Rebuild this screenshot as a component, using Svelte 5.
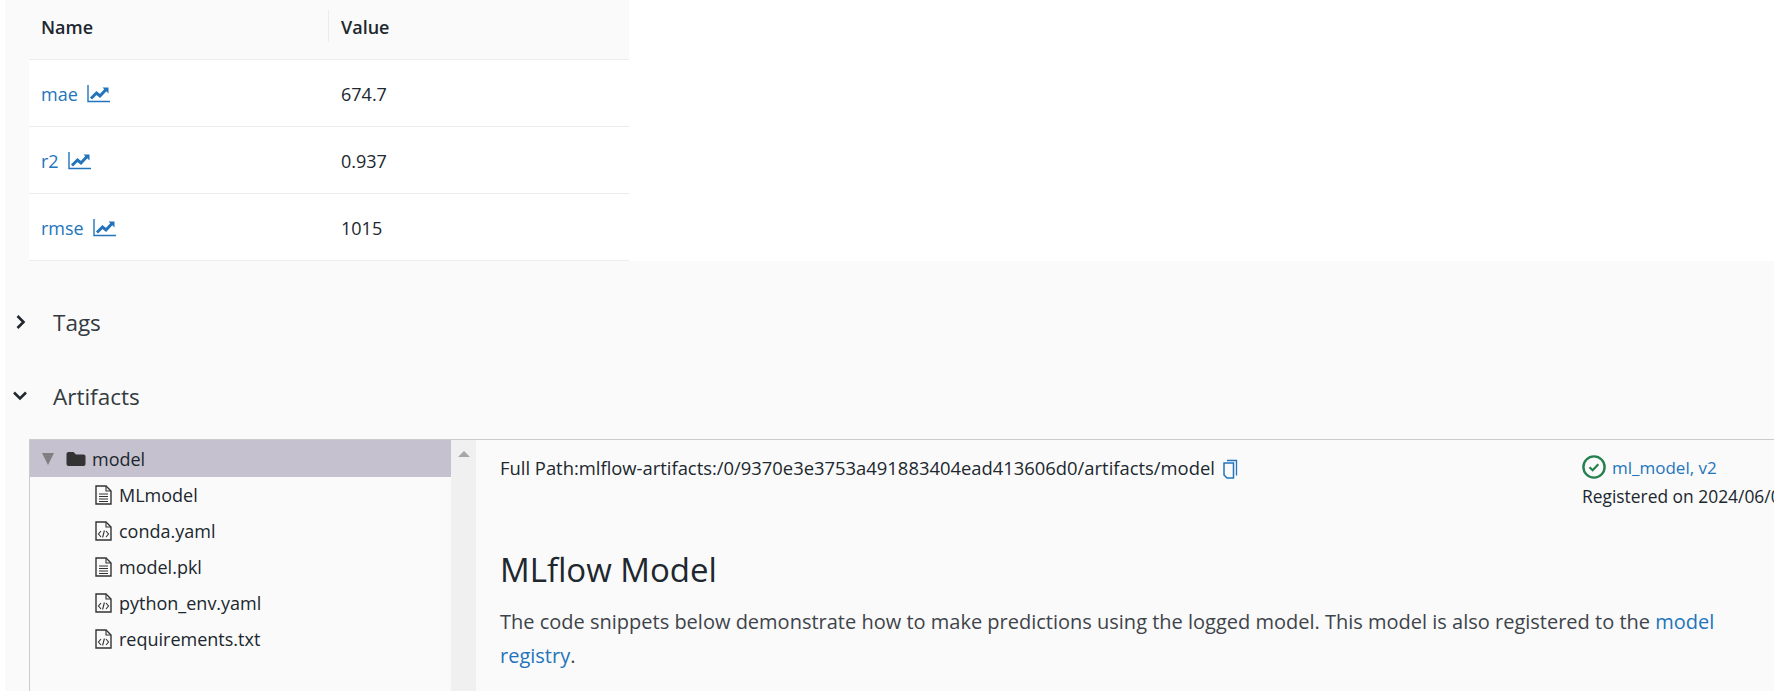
<script>
  const metrics = [
    { name: 'mae', value: '674.7' },
    { name: 'r2', value: '0.937' },
    { name: 'rmse', value: '1015' }
  ]
  const files = [
    { name: 'MLmodel', type: 'text' },
    { name: 'conda.yaml', type: 'code' },
    { name: 'model.pkl', type: 'text' },
    { name: 'python_env.yaml', type: 'code' },
    { name: 'requirements.txt', type: 'code' }
  ]
</script>

<div class="page">
  <section class="metrics">
    <table>
      <thead>
        <tr>
          <th class="col-name">Name</th>
          <th>Value</th>
        </tr>
      </thead>
      <tbody>
        {#each metrics as m}
          <tr>
            <td class="col-name">
              <a href="#metric" class="link">{m.name}</a>
              <svg class="chart" viewBox="0 0 24 20" width="24" height="20">
                <path d="M1 1v16.5h22" fill="none" stroke="#2374bb" stroke-width="1.4" />
                <path d="M4 14.5l5.5-5.5 3.5 3 6-6.5" fill="none" stroke="#2374bb" stroke-width="3" />
                <path d="M15.5 3.5h6v6z" fill="#2374bb" />
              </svg>
            </td>
            <td>{m.value}</td>
          </tr>
        {/each}
      </tbody>
    </table>
  </section>

  <div class="section-head tags">
    <svg viewBox="0 0 12 16" width="12" height="16"><path d="M2.5 2l6 6-6 6" fill="none" stroke="#20272e" stroke-width="2.6" /></svg>
    <span>Tags</span>
  </div>
  <div class="section-head artifacts">
    <svg viewBox="0 0 16 12" width="16" height="12"><path d="M2 2.5l6 6 6-6" fill="none" stroke="#20272e" stroke-width="2.6" /></svg>
    <span>Artifacts</span>
  </div>

  <div class="browser">
    <aside class="tree">
      <div class="rows">
        <div class="row root">
          <span class="caret"></span>
          <svg class="folder" viewBox="0 0 20 16" width="20" height="16">
            <path d="M2.5 1h5l2.5 2.5h7.5a2 2 0 0 1 2 2V13a2 2 0 0 1-2 2h-15a2 2 0 0 1-2-2V3a2 2 0 0 1 2-2z" fill="#333" />
          </svg>
          <span>model</span>
        </div>
        {#each files as f}
          <div class="row file">
            <svg viewBox="0 0 17 20" width="17" height="20">
              <path d="M1 1h10l5 5v13H1z" fill="none" stroke="#333" stroke-width="1.4" />
              <path d="M11 1v5h5" fill="none" stroke="#333" stroke-width="1.1" />
              {#if f.type === 'text'}
                <path d="M4 9h9M4 11.5h9M4 14h9M4 16.5h9" stroke="#333" stroke-width="1.1" />
              {:else}
                <path d="M6 10l-2.5 3L6 16M11 10l2.5 3L11 16M9.4 9.5l-1.8 7" fill="none" stroke="#333" stroke-width="1.1" />
              {/if}
            </svg>
            <span>{f.name}</span>
          </div>
        {/each}
      </div>
      <div class="scrollbar"><span class="up"></span></div>
    </aside>

    <main class="view">
      <div class="view-top">
        <div class="path">
          Full Path:mlflow-artifacts:/0/9370e3e3753a491883404ead413606d0/artifacts/model
          <svg viewBox="0 0 16 20" width="16" height="20">
            <path d="M5 1.5h9.5v15" fill="none" stroke="#2374bb" stroke-width="1.3" />
            <path d="M2 4h9.5v15H5l-3-3z" fill="none" stroke="#2374bb" stroke-width="1.5" />
          </svg>
        </div>
        <div class="registered">
          <div class="reg-name">
            <svg viewBox="0 0 24 24" width="24" height="24">
              <circle cx="12" cy="12" r="10.6" fill="none" stroke="#24804d" stroke-width="2.4" />
              <path d="M7.5 12.2l3.2 3 5.6-6" fill="none" stroke="#24804d" stroke-width="2.2" />
            </svg>
            <a href="#model" class="link">ml_model, v2</a>
          </div>
          <div class="reg-date">Registered on 2024/06/0</div>
        </div>
      </div>
      <h1>MLflow Model</h1>
      <p>The code snippets below demonstrate how to make predictions using the logged model. This model is also registered to the <a href="#registry" class="link">model registry</a>.</p>
    </main>
  </div>
</div>

<style>
  :global(body) {
    margin: 0;
    background: #fafafa;
  }

  .page {
    height: 691px;
    overflow: hidden;
    border-left: 5px solid #fff;
    box-sizing: border-box;
    font-family: "Open Sans", "Noto Sans", sans-serif;
    font-size: 18px;
    color: #20272e;
  }

  .link {
    color: #2374bb;
    text-decoration: none;
  }

  .metrics {
    background: #fff;
    height: 261px;
  }

  table {
    width: 624px;
    border-collapse: collapse;
    border-left: 24px solid #fafafa;
    table-layout: fixed;
  }

  th {
    height: 59px;
    padding: 0 0 5px 12px;
    box-sizing: border-box;
    background: #fafafa;
    border-bottom: 1px solid #ececec;
    text-align: left;
    font-weight: 600;
  }

  td {
    height: 67px;
    padding: 3px 0 0 12px;
    box-sizing: border-box;
    background: #fff;
    border-bottom: 1px solid #ececec;
  }

  .col-name {
    width: 312px;
  }

  th.col-name {
    position: relative;
  }

  th.col-name::after {
    content: '';
    position: absolute;
    top: 10px;
    right: 0;
    width: 1px;
    height: 32px;
    background: #ececec;
  }

  .chart {
    vertical-align: -3px;
    margin-left: 5px;
  }

  .section-head {
    display: flex;
    align-items: center;
    font-size: 22.5px;
    color: #333a41;
  }

  .section-head svg {
    flex: none;
  }

  .section-head.tags {
    padding: 46px 0 0 10px;
    height: 30px;
  }

  .section-head.tags span {
    margin-left: 26px;
  }

  .section-head.artifacts {
    padding: 44px 0 0 7px;
    height: 30px;
  }

  .section-head.artifacts span {
    margin-left: 25px;
  }

  .browser {
    display: flex;
    margin: 28px 0 0 24px;
    border-top: 1px solid #ccc;
    border-left: 1px solid #ccc;
    height: 260px;
  }

  .tree {
    display: flex;
    flex: none;
    width: 446px;
  }

  .rows {
    flex: 1;
  }

  .row {
    display: flex;
    align-items: center;
    height: 36px;
  }

  .root {
    height: 37px;
    background: #c5c1ce;
    padding-left: 12px;
  }

  .caret {
    width: 0;
    height: 0;
    border-left: 6px solid transparent;
    border-right: 6px solid transparent;
    border-top: 12px solid #808080;
  }

  .folder {
    margin-left: 12px;
    margin-right: 6px;
  }

  .file {
    padding-left: 65px;
  }

  .file svg {
    margin-right: 7px;
  }

  .scrollbar {
    width: 25px;
    background: #f0f0f0;
    box-sizing: border-box;
    padding: 11px 0 0 7px;
  }

  .up {
    display: block;
    width: 0;
    height: 0;
    border-left: 6px solid transparent;
    border-right: 6px solid transparent;
    border-bottom: 6px solid #a6a6a6;
  }

  .view {
    flex: 1;
    min-width: 0;
    padding: 15px 0 0 24px;
  }

  .view-top {
    display: flex;
    justify-content: space-between;
  }

  .path {
    font-size: 18.4px;
  }

  .path svg {
    vertical-align: -4px;
    margin-left: 2px;
  }

  .registered {
    width: 192px;
    flex: none;
    white-space: nowrap;
  }

  .reg-name {
    display: flex;
    align-items: center;
    gap: 6px;
    font-size: 17px;
  }

  .reg-date {
    margin-top: 5px;
    font-size: 17.4px;
  }

  h1 {
    margin: 40px 0 0;
    font-size: 33px;
    font-weight: 500;
    line-height: 44px;
    color: #20272e;
  }

  p {
    margin: 13px 0 0;
    width: 1240px;
    font-size: 20px;
    line-height: 34px;
    color: #3e444a;
  }
</style>
